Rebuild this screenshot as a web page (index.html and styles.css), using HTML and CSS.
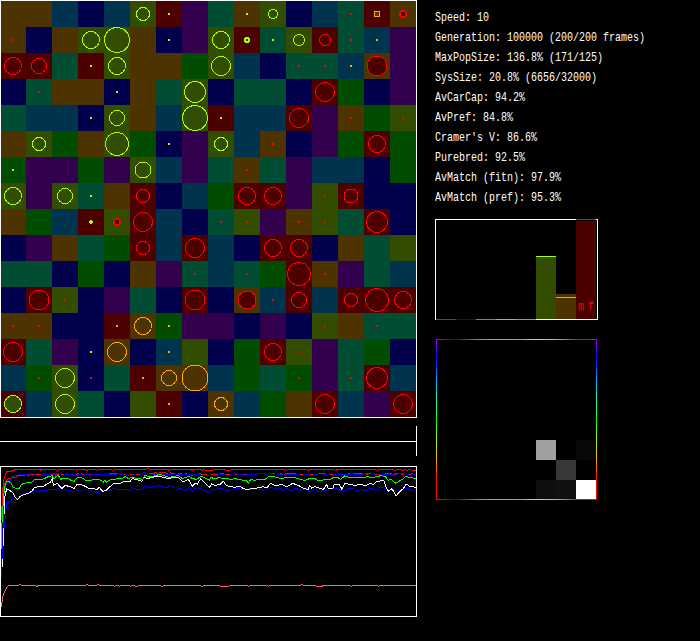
FILE: index.html
```
<!DOCTYPE html>
<html lang="en">
<head>
<meta charset="utf-8">
<title>Population simulation</title>
<link rel="stylesheet" href="styles.css">
</head>
<body>
<main class="app">
  <section class="left">
    <div class="world" id="world"></div>
    <div class="timeline"><div class="timeline-line"></div></div>
    <svg class="history" viewBox="0 138 1251 453" preserveAspectRatio="none">
      <polyline class="blue" points="4,475 8,395 12,330 16,285 20,248 26,246 32,242 38,236 46,240 58,230 72,222 90,216 105,210 118,216 124,210 140,212 150,208 160,210 175,206 190,207 205,212 218,214 226,207 240,214 255,208 272,211 290,218 305,213 325,212 343,206 358,209 380,208 390,211 400,206 420,209 430,205 435,197 450,202 475,197 485,199 500,203 510,197 523,202 532,210 540,204 553,212 570,203 576,216 583,203 587,208 595,206 608,208 625,218 635,209 650,207 665,206 680,212 695,209 710,205 730,208 748,208 760,210 780,208 790,211 805,206 815,202 830,208 840,203 848,210 860,205 875,212 888,204 900,211 918,206 930,214 945,208 955,215 975,212 990,205 1005,205 1020,210 1032,213 1042,207 1060,206 1072,214 1085,208 1096,212 1110,204 1130,212 1137,202 1152,203 1162,209 1178,206 1190,214 1205,210 1218,204 1235,211 1248,207"/>
      <polyline class="white" points="4,470 7,428 8,395 11,350 12,285 14,232 20,206 30,212 38,218 45,232 53,238 60,230 72,224 85,220 95,214 102,204 115,200 130,200 140,192 152,186 157,176 160,196 172,190 180,200 186,206 195,196 210,200 222,206 232,192 250,196 265,204 280,206 292,208 298,202 308,214 320,210 330,200 342,190 360,190 375,184 390,186 396,176 410,178 425,184 432,170 442,176 455,172 470,170 482,170 505,176 520,172 535,172 550,186 565,178 577,198 585,190 592,192 602,176 610,184 620,194 628,202 635,192 645,196 660,194 670,184 678,196 690,200 705,202 720,198 730,206 745,210 755,204 770,204 790,200 800,204 812,190 825,196 848,194 860,200 878,190 895,196 912,206 925,208 928,196 935,204 945,200 958,204 970,208 980,194 985,206 998,206 1003,192 1018,194 1026,208 1035,190 1052,194 1068,196 1080,192 1096,198 1110,190 1120,194 1130,184 1152,182 1160,206 1166,214 1176,206 1188,228 1200,214 1210,206 1218,192 1228,198 1248,202"/>
      <polyline class="blue" points="4,475 8,360 12,225 18,195 22,183 32,180 36,170 48,166 60,163 108,163 112,158 118,163 155,163 158,160 165,164 172,161 180,163 228,163 232,168 238,163 350,163 354,159 360,163 378,163 382,167 390,163 420,163 432,158 445,161 460,163 480,161 500,163 530,164 552,162 572,162 576,168 585,162 612,163 630,168 640,161 660,163 695,163 704,158 710,163 770,163 785,160 800,163 815,159 828,162 868,163 885,163 900,164 918,162 940,164 960,161 984,163 1020,162 1040,163 1054,165 1080,163 1115,160 1136,165 1160,162 1170,164 1190,162 1210,160 1218,164 1248,163"/>
      <path class="red" d="M5,300 L10,210 L14,190 L22,178 L34,174 L48,171 L56,166 L76,166 M80,167 L102,163 M108,163 L124,163 M152,165 L160,162 M164,164 L176,162 M184,163 L192,163 M228,163 L236,161 M242,161 L250,163 M266,163 L274,163 M326,162 L350,161 M368,163 L376,163 M390,162 L402,162 M408,163 L420,163 M448,160 L462,160 L465,157 L472,160 M478,157 L492,158 L505,160 M510,158 L518,161 L526,160 M535,161 L545,162 M554,160 L562,160 M574,165 L578,165 M596,161 L612,163 L622,162 M632,163 L645,163 L655,162 M660,160 L673,160 M677,163 L692,162 M704,162 L710,163 M730,162 L735,162 M816,160 L822,160 M840,160 L846,160 M852,163 L858,160 L888,162 M900,164 L910,164 M930,163 L942,163 M956,162 L975,160 M990,162 L1002,166 M1044,162 L1050,160 M1062,160 L1090,160 M1098,163 L1112,160 M1126,162 L1138,164 M1156,161 L1175,160 M1180,163 L1194,160 M1202,162 L1212,162 M1226,163 L1240,161"/>
      <polyline class="green" points="4,387 6,310 10,240 14,200 20,184 25,184 32,188 40,202 50,207 58,206 64,193 78,189 95,188 102,180 118,178 130,177 145,170 157,167 162,178 168,170 175,166 182,178 192,174 205,176 215,182 222,184 233,172 245,173 256,180 270,181 285,179 300,180 310,186 314,181 320,186 330,180 342,178 355,176 367,176 376,169 385,176 395,172 410,175 428,178 434,166 450,171 465,167 480,163 490,166 508,172 520,169 535,167 546,175 556,173 566,168 577,176 590,178 603,168 610,171 620,177 628,181 633,172 642,176 658,173 670,176 680,176 694,178 706,176 715,178 730,181 740,183 745,189 752,179 765,181 780,177 795,178 805,171 816,169 830,172 844,176 855,173 870,171 885,173 900,178 915,181 928,176 945,176 956,183 970,180 980,177 990,180 1002,171 1012,172 1022,178 1034,168 1052,173 1068,174 1080,171 1090,174 1102,170 1118,173 1128,170 1144,167 1156,170 1165,181 1173,177 1187,190 1200,182 1210,176 1218,169 1230,173 1248,175"/>
      <polyline class="red" points="4,300 7,240 9,200 12,178 18,160 22,153 30,156 38,151 52,148.5 120,148.5 123,151 127,148.5 165,148.5 169,151 173,148.5 225,148.5 229,151 233,148.5 256,148.5 262,151 267,148.5 285,148.5 289,151 293,148.5 333,148.5 337,151 341,148.5 440,148.5 444,145 448,148.5 503,148.5 507,151 512,148.5 572,148.5 576,151 580,148.5 602,148.5 606,151 612,148.5 618,151 640,151 646,148.5 675,148.5 680,151 692,151 696,148.5 850,148.5 853,151 858,148.5 862,151 866,148.5 922,148.5 926,151 932,148.5 1003,148.5 1008,151 1012,148.5 1125,148.5 1129,151 1134,148.5 1180,148.5 1185,151 1190,148.5 1202,148.5 1208,151 1214,148.5 1222,151 1228,148.5 1235,151 1248,151"/>
      <polyline class="pink" points="4,560 7,538 10,522 14,514 20,502 24,498 34,497 56,496 60,493 64,496 105,496 111,499 116,496 256,496 261,493 266,496 289,496 294,493 298,496 338,496 343,499 349,496 354,496 358,499 362,496 387,496 392,499 398,496 410,499 422,496 480,496 486,499 492,496 600,496 606,499 612,496 685,499 690,496 740,496 745,499 752,496 802,496 806,499 812,496 900,496 906,493 912,496 965,499 972,496 1050,496 1055,499 1060,496 1130,496 1135,499 1142,496 1248,496"/>
    </svg>
  </section>
  <section class="right">
    <div class="stats">
      <div>Speed: 10</div>
      <div>Generation: 100000 (200/200 frames)</div>
      <div>MaxPopSize: 136.8% (171/125)</div>
      <div>SysSize: 20.8% (6656/32000)</div>
      <div>AvCarCap: 94.2%</div>
      <div>AvPref: 84.8%</div>
      <div>Cramer's V: 86.6%</div>
      <div>Purebred: 92.5%</div>
      <div>AvMatch (fitn): 97.9%</div>
      <div>AvMatch (pref): 95.3%</div>
    </div>
    <svg class="bars" viewBox="0 0 163 101">
      <rect class="frame" x=".5" y=".5" width="162" height="100"/>
      <rect x="101" y="38" width="20" height="62" fill="#334d00"/>
      <rect x="101" y="37" width="20" height="1" fill="#aaff00"/>
      <rect x="121" y="75" width="20" height="25" fill="#4d3300"/>
      <rect x="121" y="78" width="20" height="1" fill="#ffaa00"/>
      <rect x="141" y="0" width="20" height="1" fill="#ff0000"/>
      <rect x="141" y="1" width="20" height="1" fill="#000000"/>
      <rect x="141" y="2" width="20" height="98" fill="#4d0000"/>
      <rect x="1" y="100" width="20" height="1" fill="#aa00ff"/>
      <rect x="21" y="100" width="20" height="1" fill="#0000ff"/>
      <rect x="41" y="100" width="20" height="1" fill="#00aaff"/>
      <rect x="61" y="100" width="20" height="1" fill="#00ffaa"/>
      <rect x="81" y="100" width="20" height="1" fill="#00ff00"/>
      <text class="sex" x="143" y="70">m</text>
      <text class="sex" x="153" y="70">f</text>
    </svg>
    <div class="matrix">
      <div class="matrix-inner">
        <i class="m1"></i><i class="m2"></i><i class="m3"></i><i class="m4"></i><i class="m5"></i><i class="m6"></i>
      </div>
    </div>
  </section>
</main>
<script src="world.js"></script>
</body>
</html>
```
FILE: styles.css
```
* { box-sizing: border-box; }
body { margin: 0; background: #000; overflow: hidden; }
.app { display: flex; gap: 18px; width: 700px; height: 641px; }
.left { width: 417px; flex: none; }
.world { width: 417px; height: 418px; }
.world svg { display: block; }
.world circle, .world .box { stroke-width: 1; }
.world .edge { fill: none; stroke: #fff; }
.c-R { fill: #4d0000; } .c-O { fill: #4d3300; } .c-Y { fill: #334d00; } .c-G { fill: #004d00; }
.c-T { fill: #004d33; } .c-B { fill: #00334d; } .c-N { fill: #00004d; } .c-P { fill: #33004d; }
.s-R { stroke: #ff0000; } .s-O { stroke: #ffaa00; } .s-Y { stroke: #aaff00; }
.d-R { fill: #ff0000; } .d-O { fill: #ffaa00; } .d-Y { fill: #aaff00; }
.timeline { height: 30px; margin: 8px 0 10px; border-right: 1px solid #fff; padding-top: 15px; }
.timeline-line { height: 1px; background: #fff; }
.history { display: block; width: 417px; height: 151px; outline: 1px solid #fff; outline-offset: -1px; shape-rendering: crispEdges; }
.history polyline, .history path { fill: none; stroke-width: 1; vector-effect: non-scaling-stroke; }
.blue { stroke: #0000ff; } .white { stroke: #fff; } .red { stroke: #ff0000; } .green { stroke: #00ff00; } .pink { stroke: #ff6666; }
.right { width: 240px; padding-top: 8px; }
.stats { height: 211px; color: #fff; font: 10px/20px "Liberation Mono", monospace; white-space: nowrap; }
.stats div { height: 20px; transform: scaleY(1.3); transform-origin: 50% 50%; }
.bars { display: block; width: 163px; height: 101px; shape-rendering: crispEdges; }
.frame { fill: none; stroke: #fff; }
.sex { fill: #ff0000; font: 10px "Liberation Mono", monospace; transform: scaleY(1.3); }
.matrix { width: 161px; height: 161px; margin: 19px 0 0 1px; padding: 1px;
  background:
    linear-gradient(90deg, #a0f, #00f 12.5%, #0af 25%, #0fa 37.5%, #0f0 50%, #af0 62.5%, #fa0 75%, #f00 87.5%) 0 0 / 100% 1px no-repeat,
    linear-gradient(90deg, #a0f, #00f 12.5%, #0af 25%, #0fa 37.5%, #0f0 50%, #af0 62.5%, #fa0 75%, #f00 87.5%) 0 100% / 100% 1px no-repeat,
    linear-gradient(#a0f, #00f 12.5%, #0af 25%, #0fa 37.5%, #0f0 50%, #af0 62.5%, #fa0 75%, #f00 87.5%); }
.matrix-inner { display: grid; grid-template: 100px 20px 20px 19px / 99px 20px 20px 20px; background: #000; width: 159px; height: 159px; overflow: hidden; }
.m1 { grid-area: 2 / 2; background: #a0a0a0; }
.m2 { grid-area: 2 / 4; background: #080808; }
.m3 { grid-area: 3 / 3; background: #383838; }
.m4 { grid-area: 4 / 2; background: #0e0e0e; }
.m5 { grid-area: 4 / 3; background: #111; }
.m6 { grid-area: 4 / 4; background: #fff; }
```
FILE: world.js
```
// Habitat colour of every cell, one letter per cell.
const cells = [
  "OOBNBYRPTOYNBTRO",
  "ONOYYONPYRTYRTBP",
  "RRTRYOOGYBNTTBOP",
  "NTOONOTYNTTNRGNP",
  "TBBNYOBYRBBRPOGY",
  "OYGOYGNPYBONPGRG",
  "GPPGPYBPTOTPBBNG",
  "YPYTORNBGRRPYRNN",
  "OGBRYRBNTYPOYTRN",
  "NPOTGRBRBNRRNOTY",
  "TTNGNOPTBTGROPTB",
  "NRYNPTNRNOBRBRRR",
  "OONNROGPPNPNYOTT",
  "RTPNONBYNGRYPTGN",
  "BGYNTROOBGTGPTRB",
  "RBYTNYRNOBGORBPR"
];
// Populations per row: column, colour, radius (0 is a dot, "s" is a square).
const marks = [
  "5Y6.5 6Y0 9Y0 10Y4.5 13R0 14Os 15R3",
  "0R0 3Y8.5 4Y12.5 6Y0 8Y8.5 9Y2 10Y0 11Y5.5 12R5.5 13R0 14O0",
  "0R8.5 1R7.5 3Y0 4Y8.5 8Y9.5 11R0 12R0 13O0 14R10",
  "1R0 4Y0 7Y10.5 12R9.5",
  "3Y0 4Y7.5 7Y12.5 8Y0 11R9.5 13R0 15R0",
  "1Y6.5 4Y11.5 6Y0 8Y6.5 10R0 14R8.5",
  "0Y0 5Y8 9R0",
  "0Y8.5 2Y7.5 3Y0 5R6.5 9R8.5 10R8.5 12R0 13R7",
  "3Y1 4R3 5R9.5 8R0 9R0 11R0 12R0 14R10.5",
  "5R6.5 7R9.5 10R8.5 11R8.5",
  "7R0 9R0 11R11.5 12R0",
  "1R10 2R0 7R10 9R9 10R0 11R7.5 13R6.5 14R11.5 15R8.5",
  "0R0 1R0 4O0 5O8.5 6O0 12R0 14R0",
  "0R9.5 3Y0 4O9.5 6O0 10R8.5 11R0",
  "1R0 2Y9.5 3R0 5O0 6O7.5 7O13 11R0 13R0 14R10.5",
  "0Y8.5 2Y9.5 6O0 8O6.5 12R9.5 15R9.5"
];
const block = (cls, x, y, w, h) =>
  `<rect class="${cls}" x="${x - w / 2}" y="${y - h / 2}" width="${w}" height="${h}"/>`;
let out = "";
cells.forEach((row, r) => [...row].forEach((c, i) => {
  out += `<rect class="c-${c}" x="${i * 26}" y="${r * 26 + 1}" width="26" height="26"/>`;
}));
marks.forEach((row, r) => row.split(" ").forEach(m => {
  const [, col, c, size] = m.match(/^(\d+)([RYO])(.+)$/);
  const x = col * 26 + 13, y = r * 26 + 14, d = `d-${c}`;
  if (size === "s") out += block(`box c-${c} s-${c}`, x, y, 5, 5);
  else if (size === "0") out += block(d, x, y, 2, 2);
  else if (size === "1") out += block(d, x, y, 2, 4) + block(d, x, y, 4, 2);
  else if (size === "2") out += block(d, x, y, 4, 6) + block(d, x, y, 6, 4) + block(`c-${c}`, x, y, 2, 2);
  else if (size === "3") out += block(d, x, y, 4, 8) + block(d, x, y, 8, 4) + block(d, x, y, 6, 6)
    + block(`c-${c}`, x, y, 4, 4);
  else out += `<circle class="c-${c} s-${c}" cx="${x}" cy="${y}" r="${size}"/>`;
}));
out += '<rect class="edge" x=".5" y=".5" width="416" height="417"/>';
document.getElementById("world").innerHTML =
  `<svg width="417" height="418" shape-rendering="crispEdges">${out}</svg>`;
```
